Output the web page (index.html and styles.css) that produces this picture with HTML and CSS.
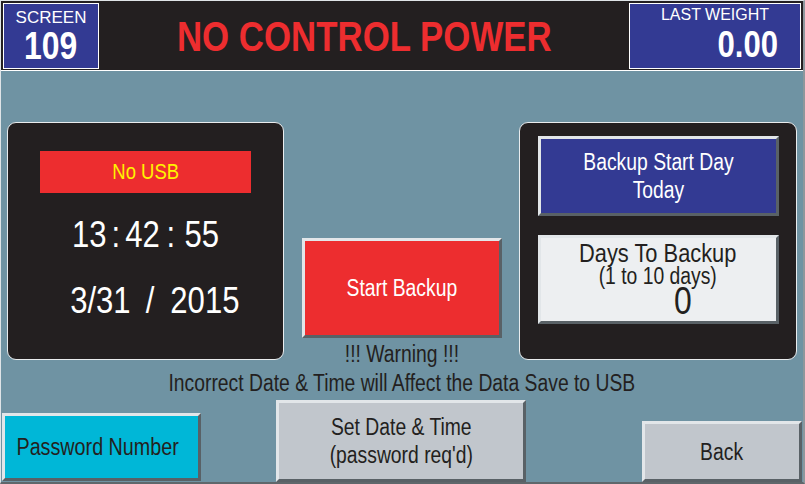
FILE: index.html
```html
<!DOCTYPE html>
<html>
<head>
<meta charset="utf-8">
<link rel="stylesheet" href="styles.css">
</head>
<body>
<div class="screen">
  <header class="header">
    <div class="idbox">
      <div class="idlabel">SCREEN</div>
      <div class="idnum"><span class="n">109</span></div>
    </div>
    <div class="title"><span class="n n-title">NO CONTROL POWER</span></div>
    <div class="weightbox">
      <div class="wlabel">LAST WEIGHT</div>
      <div class="wnum"><span class="n n-right">0.00</span></div>
    </div>
  </header>
  <main class="content">
    <section class="panel panel-left">
      <div class="usb"><span class="n">No USB</span></div>
      <div class="time n"><span>13</span><span class="c1">:</span><span>42</span><span class="c2">:</span><span>55</span></div>
      <div class="date n"><span>3/31</span><span class="slash">/</span><span>2015</span></div>
    </section>
    <section class="middle">
      <div class="btn btn-red start"><span class="n">Start Backup</span></div>
      <div class="warn warn1"><span class="n">!!! Warning !!!</span></div>
      <div class="warn"><span class="n">Incorrect Date &amp; Time will Affect the Data Save to USB</span></div>
    </section>
    <section class="panel panel-right">
      <div class="btn btn-blue startday">
        <div class="lines n"><span>Backup Start Day</span><span>Today</span></div>
      </div>
      <div class="btn btn-light days">
        <div class="lines n">
          <span class="d1">Days To Backup</span>
          <span class="d2">(1 to 10 days)</span>
          <span class="d3">0</span>
        </div>
      </div>
    </section>
  </main>
  <footer class="bottom">
    <div class="btn btn-cyan pw"><span class="n">Password Number</span></div>
    <div class="btn btn-grey setdt">
      <div class="lines n"><span>Set Date &amp; Time</span><span>(password req'd)</span></div>
    </div>
    <div class="btn btn-grey back"><span class="n">Back</span></div>
  </footer>
</div>
</body>
</html>
```
FILE: styles.css
```css
html, body {
  margin: 0;
  padding: 0;
  background: #6f93a3;
}
.screen {
  box-sizing: border-box;
  width: 805px;
  height: 484px;
  background: #6f93a3;
  border-top: 1px solid #dfe4e7;
  border-left: 1px solid #dfe4e7;
  border-right: 2px solid #8d979c;
  border-bottom: 2px solid #5f676b;
  display: flex;
  flex-direction: column;
  font-family: "Liberation Sans", Arial, sans-serif;
  color: #231f20;
  overflow: hidden;
}
/* condensed text, as on the HMI panel */
.n {
  display: inline-block;
  white-space: nowrap;
  transform: scaleX(0.84);
}
.n-title { transform: scaleX(0.81); }
.n-right { transform-origin: right center; }

.header {
  box-sizing: border-box;
  height: 70px;
  flex: 0 0 70px;
  background: #231f20;
  border-bottom: 1px solid #ffffff;
  display: flex;
  align-items: flex-start;
  padding: 2px 2px 0 2px;
}
.idbox, .weightbox {
  box-sizing: border-box;
  height: 66px;
  background: #333a93;
  border: 1px solid #ffffff;
  color: #ffffff;
  display: flex;
  flex-direction: column;
}
.idbox {
  width: 96px;
  align-items: center;
  padding-top: 5px;
}
.idlabel {
  font-size: 17px;
  line-height: 17px;
}
.idnum {
  font-weight: bold;
  font-size: 38px;
  line-height: 34px;
  margin-top: 3px;
}
.title {
  flex: 1;
  text-align: center;
  color: #ed2d2f;
  font-weight: bold;
  font-size: 43px;
  line-height: 66px;
}
.weightbox {
  width: 172px;
  padding-top: 3px;
  padding-right: 22px;
}
.wlabel {
  font-size: 16px;
  line-height: 16px;
  text-align: center;
  padding-left: 22px;
}
.wnum {
  font-weight: bold;
  font-size: 37px;
  line-height: 34px;
  margin-top: 5px;
  text-align: right;
}
.content {
  flex: 0 0 auto;
  height: 238px;
  margin-top: 51px;
  padding-left: 6px;
  display: flex;
  align-items: flex-start;
}
.panel {
  box-sizing: border-box;
  height: 238px;
  background: #231f20;
  border: 1px solid #e9ecee;
  border-radius: 9px;
  display: flex;
  flex-direction: column;
  align-items: center;
}
.panel-left {
  width: 277px;
  padding-top: 28px;
  color: #ffffff;
}
.usb {
  width: 211px;
  height: 42px;
  background: #ed2d2f;
  color: #fff200;
  font-size: 22px;
  line-height: 42px;
  text-align: center;
}
.time, .date {
  display: flex;
  font-size: 37px;
  line-height: 40px;
}
.time {
  margin-top: 22px;
}
.time .c1 { margin: 0 6px; }
.time .c2 { margin: 0 11px 0 8px; }
.date {
  margin-top: 26px;
  margin-left: 19px;
}
.date .slash { margin: 0 19px 0 18px; }
.middle {
  width: 235px;
  display: flex;
  flex-direction: column;
  align-items: center;
}
.btn {
  box-sizing: border-box;
  border: 3px solid;
  border-color: #e2e6e9 #596166 #596166 #e2e6e9;
  display: flex;
  flex-direction: column;
  align-items: center;
  justify-content: center;
  font-size: 23px;
  line-height: 28px;
  text-align: center;
}
.lines {
  display: flex;
  flex-direction: column;
  align-items: center;
}
.start {
  width: 200px;
  height: 100px;
  margin-top: 116px;
  color: #ffffff;
}
.btn-red { background: #ed2d2f; }
.btn-blue { background: #333a93; color: #ffffff; }
.btn-light { background: #edeff1; }
.btn-cyan { background: #00b7d7; }
.btn-grey { background: #c1c6cc; }
.warn {
  font-size: 23px;
  line-height: 29px;
  white-space: nowrap;
}
.warn1 { margin-top: 2px; }
.panel-right {
  width: 278px;
  padding-top: 13px;
}
.startday {
  width: 241px;
  height: 80px;
}
.days {
  width: 241px;
  height: 89px;
  margin-top: 19px;
  justify-content: flex-start;
  padding-top: 2px;
}
.d1 { font-size: 26px; line-height: 26px; }
.d2 { font-size: 23px; line-height: 20px; }
.d3 { font-size: 38px; line-height: 30px; margin-left: 60px; }
.bottom {
  flex: 1;
  display: flex;
  align-items: flex-end;
  padding-left: 1px;
}
.pw {
  width: 199px;
  height: 68px;
  margin-bottom: 1px;
  padding-right: 8px;
}
.pw .n { font-size: 23.5px; }
.setdt {
  width: 250px;
  height: 82px;
  margin-left: 75px;
}
.back {
  width: 160px;
  height: 61px;
  margin-left: 116px;
}
```
